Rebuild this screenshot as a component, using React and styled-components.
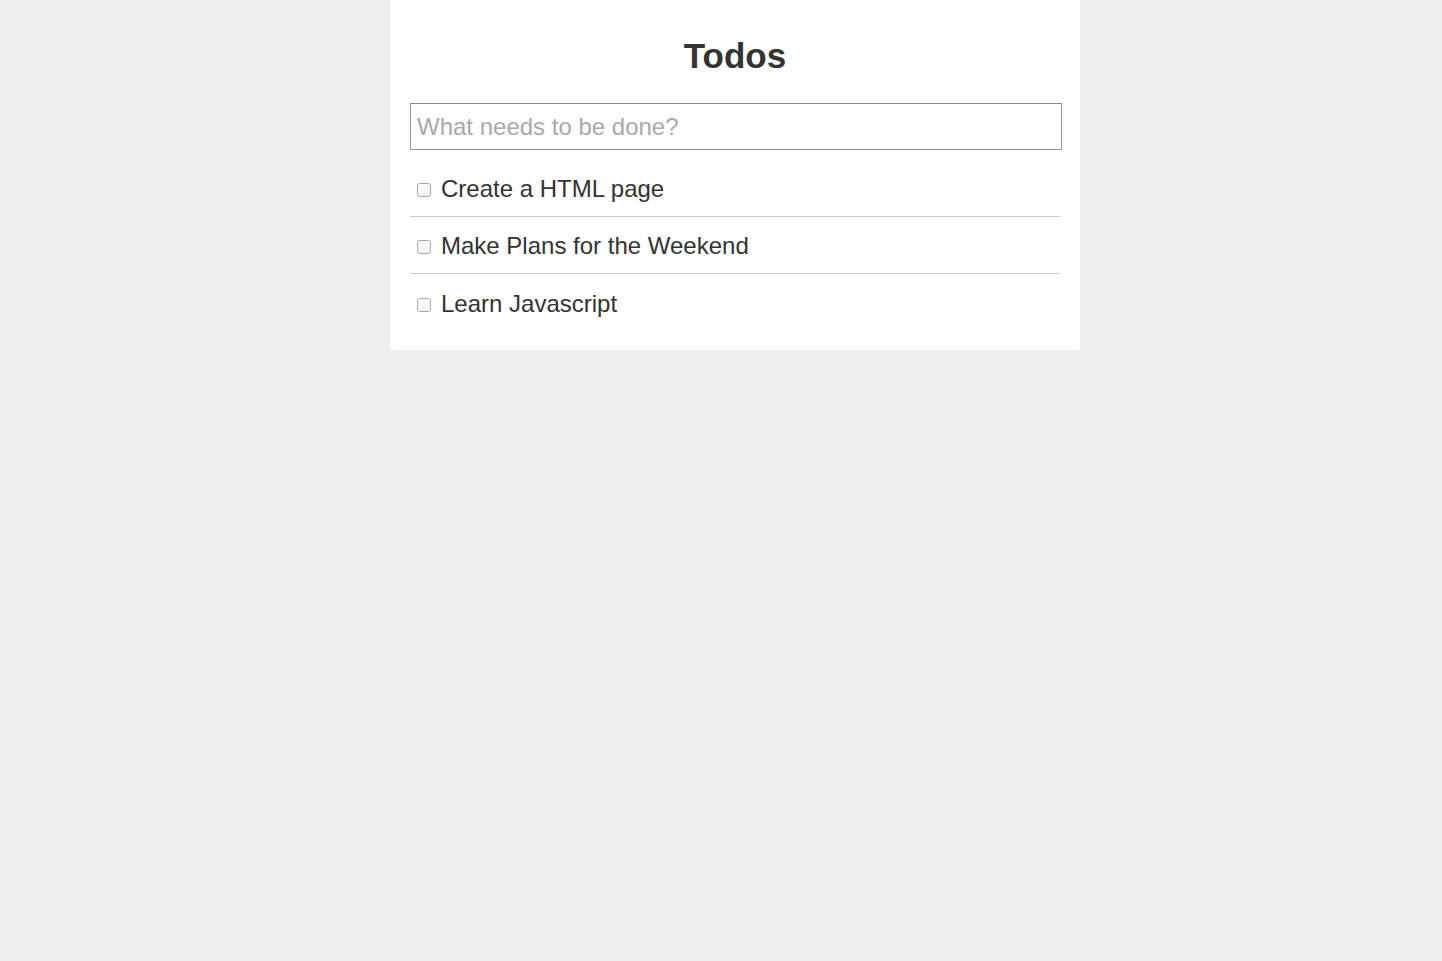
import React from "react";
import styled, { createGlobalStyle } from "styled-components";

const Global = createGlobalStyle`
  html, body { margin: 0; padding: 0; background: #eeeeee; }
  body { font-family: "Liberation Sans", Arial, Helvetica, sans-serif; color: #333; }
  * { box-sizing: border-box; }
`;

const Page = styled.div`
  min-height: 961px;
  display: flex;
  justify-content: center;
  align-items: flex-start;
  padding-left: 28px;
`;

const Card = styled.div`
  width: 690px;
  background: #fff;
  border-radius: 0 0 4px 4px;
  padding: 35px 20px 19px;
`;

const Title = styled.h1`
  margin: 0 0 26px;
  text-align: center;
  font-size: 35px;
  line-height: 42px;
  font-weight: bold;
  color: #333;
`;

const Input = styled.input`
  display: block;
  width: 652px;
  height: 47px;
  border: 1px solid #999;
  border-top-color: #888;
  padding: 0 6px;
  font-family: "Liberation Sans", Arial, sans-serif;
  font-size: 24px;
  color: #333;
  outline: none;
  &::placeholder { color: #a9a9a9; }
`;

const List = styled.ul`
  list-style: none;
  margin: 10px 0 0;
  padding: 0;
  width: 650px;
`;

const Item = styled.li`
  height: 57px;
  display: flex;
  align-items: center;
  padding-left: 7px;
  padding-top: 2px;
  border-bottom: ${p => (p.$last ? "none" : "1px solid #ccc")};
`;

const Check = styled.input`
  width: 14px;
  height: 14px;
  margin: 2px 10px 0 0;
  appearance: none;
  border: 1px solid #aaa;
  border-radius: 3px;
  background: linear-gradient(#fff, #f4f4f4);
`;

const Label = styled.span`
  font-size: 24px;
  color: #333;
`;

const todos = ["Create a HTML page", "Make Plans for the Weekend", "Learn Javascript"];

export default function App() {
  return (
    <>
      <Global />
      <Page>
        <Card>
          <Title>Todos</Title>
          <Input placeholder="What needs to be done?" autoFocus />
          <List>
            {todos.map((t, i) => (
              <Item key={t} $last={i === todos.length - 1}>
                <Check type="checkbox" />
                <Label>{t}</Label>
              </Item>
            ))}
          </List>
        </Card>
      </Page>
    </>
  );
}
